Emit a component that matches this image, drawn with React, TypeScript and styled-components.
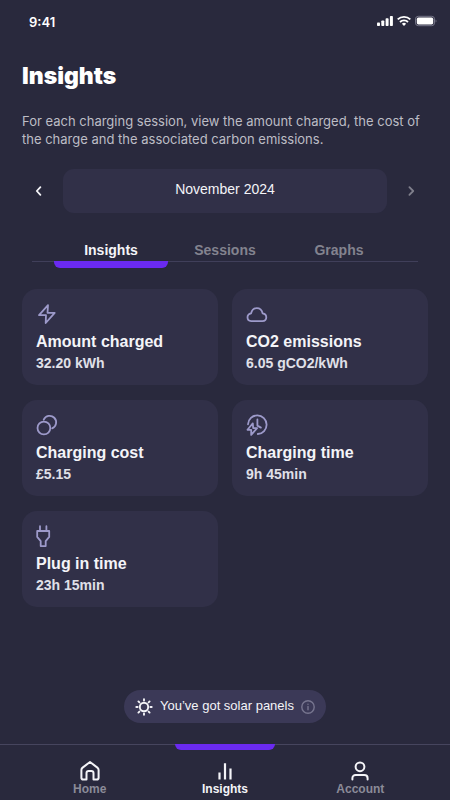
import React from "react";
import styled, { createGlobalStyle } from "styled-components";

const GlobalStyle = createGlobalStyle`
  * { box-sizing: border-box; }
  html, body { margin: 0; background: #29293d; }
  body { font-family: "Liberation Sans", Arial, sans-serif; color: #f4f4f8; }
  button { font: inherit; color: inherit; background: none; border: 0; padding: 0; cursor: pointer; }
  h1, h2, p { margin: 0; }
  svg { display: block; }
`;

const Page = styled.div`
  min-height: 100vh;
  display: flex;
  flex-direction: column;
  background: #29293d;
`;

const StatusBar = styled.header`
  display: flex;
  align-items: center;
  justify-content: space-between;
  padding: 12px 13px 0 29px;
  font: 600 13px/20px Inter, sans-serif;
  color: #ffffff;
`;

const StatusIcons = styled.div`
  display: flex;
  align-items: center;
  gap: 4px;
  padding-bottom: 2px;
`;

const Main = styled.main`
  flex: 1;
  display: flex;
  flex-direction: column;
  padding: 28px 22px 21px;
`;

const Title = styled.h1`
  font: 900 23px/32px Inter, sans-serif;
  color: #ffffff;
`;

const Intro = styled.p`
  margin-top: 20px;
  font: 400 13px/18px Inter, sans-serif;
  color: #bdbdc5;
`;

const MonthPicker = styled.div`
  display: flex;
  align-items: center;
  gap: 7px;
  margin-top: 21px;
`;

const ArrowButton = styled.button<{ $dim?: boolean }>`
  width: 34px;
  height: 44px;
  display: grid;
  place-items: center;
  color: ${(p) => (p.$dim ? "#7f7f8c" : "#f4f4f8")};
`;

const MonthButton = styled.button`
  flex: 1;
  height: 44px;
  padding-bottom: 5px;
  border-radius: 11px;
  background: #313048;
  font-size: 14px;
`;

const Tabs = styled.div`
  display: grid;
  grid-template-columns: repeat(3, 1fr);
  margin: 27px 10px 0;
  padding: 0 22px;
  border-bottom: 1px solid #403f5a;
`;

const Tab = styled.button<{ $active?: boolean }>`
  position: relative;
  height: 21px;
  padding-bottom: 2px;
  font-size: 14px;
  line-height: 18px;
  font-weight: 700;
  color: ${(p) => (p.$active ? "#f4f4f8" : "#83838f")};
`;

const TabMarker = styled.span`
  position: absolute;
  top: 100%;
  left: 0;
  right: 0;
  height: 7px;
  border-radius: 0 0 6px 6px;
  background: #6a2af0;
`;

const CardGrid = styled.section`
  display: grid;
  grid-template-columns: 1fr 1fr;
  gap: 15px 14px;
  margin: 27px 0 24px;
`;

const Card = styled.article`
  height: 96px;
  padding: 14px;
  border-radius: 15px;
  background: #313048;
`;

const CardIcon = styled.div`
  height: 22px;
  color: #9d9aca;
`;

const CardTitle = styled.h2`
  margin-top: 7px;
  font-size: 16px;
  line-height: 20px;
  font-weight: 700;
`;

const CardValue = styled.p`
  font-size: 14px;
  line-height: 20px;
  margin-top: 1px;
  font-weight: 700;
  color: #e0e0e8;
`;

const SolarPill = styled.div`
  align-self: center;
  display: flex;
  align-items: center;
  height: 33px;
  margin-top: auto;
  padding: 0 11px;
  gap: 7px;
  border-radius: 17px;
  background: #3b3957;
  font-size: 13px;
  line-height: 20px;
`;

const PillText = styled.span`
  padding-bottom: 2px;
`;

const InfoButton = styled.button`
  color: #77758f;
`;

const BottomNav = styled.nav`
  display: grid;
  grid-template-columns: repeat(3, 1fr);
  padding: 0 22px;
  border-top: 1px solid #46455e;
`;

const NavLink = styled.a<{ $active?: boolean }>`
  position: relative;
  height: 55px;
  padding-top: 15px;
  display: flex;
  flex-direction: column;
  align-items: center;
  text-decoration: none;
  font-size: 12px;
  line-height: 14px;
  font-weight: 700;
  color: ${(p) => (p.$active ? "#f4f4f8" : "#8b8b98")};

  svg { color: #f4f4f8; }
`;

const NavMarker = styled.span`
  position: absolute;
  top: -1px;
  width: 100px;
  height: 6px;
  border-radius: 0 0 6px 6px;
  background: #6a2af0;
`;

const stroke = {
  fill: "none",
  stroke: "currentColor",
  strokeWidth: 1.8,
  strokeLinecap: "round" as const,
  strokeLinejoin: "round" as const,
  "aria-hidden": true,
};

const BoltIcon = () => (
  <svg width="22" height="22" viewBox="0 0 22 22" {...stroke}>
    <path d="M12 2.2 3 12.2h7L9.7 20 18.7 9.8h-7.2z" />
  </svg>
);

const CloudIcon = () => (
  <svg width="22" height="22" viewBox="0 0 22 22" {...stroke}>
    <path d="M5.2 18.2C2.9 18 1.5 16.5 1.5 14.3c0-2.2 1.5-3.6 3.6-4 .7-3 2.8-5.2 5.7-5.2s5.1 2.1 5.8 5.2c2.2.4 3.7 1.8 3.7 4 0 2.3-1.6 3.9-4 3.9z" />
  </svg>
);

const CoinsIcon = () => (
  <svg width="22" height="22" viewBox="0 0 22 22" {...stroke}>
    <circle cx="7.9" cy="14" r="6.4" />
    <path d="M7.7 5.7a6.5 6.5 0 1 1 8.5 8.6" />
  </svg>
);

const ChargeClockIcon = () => (
  <svg width="22" height="22" viewBox="0 0 22 22" {...stroke}>
    <path d="M2 10.3A9.3 9.3 0 1 1 11.8 20" />
    <path d="M11.4 5.5v6.1l3.5 2" />
    <path d="m6.8 9.3-5.3 6.5h3.7v5.1l5.9-6.8H7.2z" />
  </svg>
);

const PlugIcon = () => (
  <svg width="22" height="22" viewBox="0 0 22 22" {...stroke}>
    <path d="M4 1.2v4.4M10.4 1.2v4.4M1.2 6h12v5.9l-3.5 4.2v5H4.7v-5l-3.5-4.2z" />
  </svg>
);

const SunIcon = () => (
  <svg width="18" height="18" viewBox="0 0 18 18" {...stroke} strokeWidth={1.9}>
    <circle cx="9" cy="9" r="4.2" />
    <path d="M9 1.3v1.3M9 15.4v1.3M1.3 9h1.3M15.4 9h1.3M3.4 3.4l1 1M13.6 13.6l1 1M3.4 14.6l1-1M13.6 4.4l1-1" />
  </svg>
);

const InfoIcon = () => (
  <svg width="14" height="14" viewBox="0 0 14 14" {...stroke} strokeWidth={1.4}>
    <circle cx="7" cy="7" r="6.2" />
    <path d="M7 6.5v3.3M7 4.1v.2" />
  </svg>
);

const HomeIcon = () => (
  <svg width="22" height="22" viewBox="0 0 22 22" {...stroke} strokeWidth={2}>
    <path d="M11 2 3.6 7.6c-.8.6-1.2 1.3-1.2 2.3v7.8c0 1.2.7 1.8 1.8 1.8h3.3v-6.4c0-1.4.8-2.1 2.1-2.1h2.8c1.3 0 2.1.7 2.1 2.1v6.4h3.3c1.1 0 1.8-.6 1.8-1.8V9.900c0-1-.4-1.700-1.200-2.300z" />
  </svg>
);

const BarsIcon = () => (
  <svg width="22" height="22" viewBox="0 0 22 22" {...stroke} strokeWidth={2.2} strokeLinecap="butt">
    <path d="M5.5 12.500V19.600M11 3.300V19.600M16.500 8.400V19.600" />
  </svg>
);

const UserIcon = () => (
  <svg width="22" height="22" viewBox="0 0 22 22" {...stroke} strokeWidth={2}>
    <circle cx="11" cy="6.8" r="4.4" />
    <path d="M3.4 19.400v-1.200c0-2 1.300-3.200 3.300-3.200h8.600c2 0 3.300 1.200 3.300 3.200v1.200" />
  </svg>
);

const Chevron = ({ d }: { d: string }) => (
  <svg width="10" height="12" viewBox="0 0 10 12" {...stroke}>
    <path d={d} />
  </svg>
);

const SignalIcon = () => (
  <svg width="16" height="12" viewBox="0 0 16 12" fill="currentColor" aria-hidden="true">
    <rect x="0" y="7.4" width="3" height="3.6" rx="0.8" />
    <rect x="4.3" y="5.5" width="3" height="5.5" rx="0.8" />
    <rect x="8.6" y="3.2" width="3" height="7.8" rx="0.8" />
    <rect x="12.9" y="1" width="3" height="10" rx="0.8" />
  </svg>
);

const WifiIcon = () => (
  <svg width="14" height="12" viewBox="0 0 14 12" fill="none" stroke="currentColor" strokeWidth="1.9" aria-hidden="true">
    <path d="M.7 4.400a9 9 0 0 1 12.600 0M3 7a5.800 5.800 0 0 1 8 0" />
    <path d="M4.900 8.800a3 3 0 0 1 4.200 0L7 11z" fill="currentColor" stroke="none" />
  </svg>
);

const BatteryIcon = () => (
  <svg width="22" height="12" viewBox="0 0 22 12" aria-hidden="true">
    <rect x="0.5" y="1.3" width="19" height="9.4" rx="2.8" fill="none" stroke="#77778a" />
    <rect x="1.8" y="2.6" width="16.4" height="6.8" rx="1.6" fill="#fff" />
    <path d="M20.600 4.400c1 .4 1.300 2.800 0 3.200z" fill="#77778a" />
  </svg>
);

const metrics = [
  { title: "Amount charged", value: "32.20 kWh", Icon: BoltIcon },
  { title: "CO2 emissions", value: "6.05 gCO2/kWh", Icon: CloudIcon },
  { title: "Charging cost", value: "£5.15", Icon: CoinsIcon },
  { title: "Charging time", value: "9h 45min", Icon: ChargeClockIcon },
  { title: "Plug in time", value: "23h 15min", Icon: PlugIcon },
];

export default function App() {
  return (
    <Page>
      <GlobalStyle />
      <StatusBar>
        <span>9:41</span>
        <StatusIcons>
          <SignalIcon />
          <WifiIcon />
          <BatteryIcon />
        </StatusIcons>
      </StatusBar>
      <Main>
        <Title>Insights</Title>
        <Intro>
          For each charging session, view the amount charged, the cost of the charge and the
          associated carbon emissions.
        </Intro>
        <MonthPicker>
          <ArrowButton aria-label="Previous month">
            <Chevron d="M6.400 2.200 2.800 6l3.600 3.800" />
          </ArrowButton>
          <MonthButton>November 2024</MonthButton>
          <ArrowButton $dim aria-label="Next month">
            <Chevron d="M3.400 2.200 7.200 6 3.400 9.800" />
          </ArrowButton>
        </MonthPicker>
        <Tabs role="tablist">
          <Tab $active role="tab" aria-selected="true">
            Insights
            <TabMarker />
          </Tab>
          <Tab role="tab" aria-selected="false">Sessions</Tab>
          <Tab role="tab" aria-selected="false">Graphs</Tab>
        </Tabs>
        <CardGrid>
          {metrics.map(({ title, value, Icon }) => (
            <Card key={title}>
              <CardIcon>
                <Icon />
              </CardIcon>
              <CardTitle>{title}</CardTitle>
              <CardValue>{value}</CardValue>
            </Card>
          ))}
        </CardGrid>
        <SolarPill>
          <SunIcon />
          <PillText>You’ve got solar panels</PillText>
          <InfoButton aria-label="About solar panels">
            <InfoIcon />
          </InfoButton>
        </SolarPill>
      </Main>
      <BottomNav aria-label="Main">
        <NavLink href="#home">
          <HomeIcon />
          Home
        </NavLink>
        <NavLink href="#insights" $active aria-current="page">
          <NavMarker />
          <BarsIcon />
          Insights
        </NavLink>
        <NavLink href="#account">
          <UserIcon />
          Account
        </NavLink>
      </BottomNav>
    </Page>
  );
}
